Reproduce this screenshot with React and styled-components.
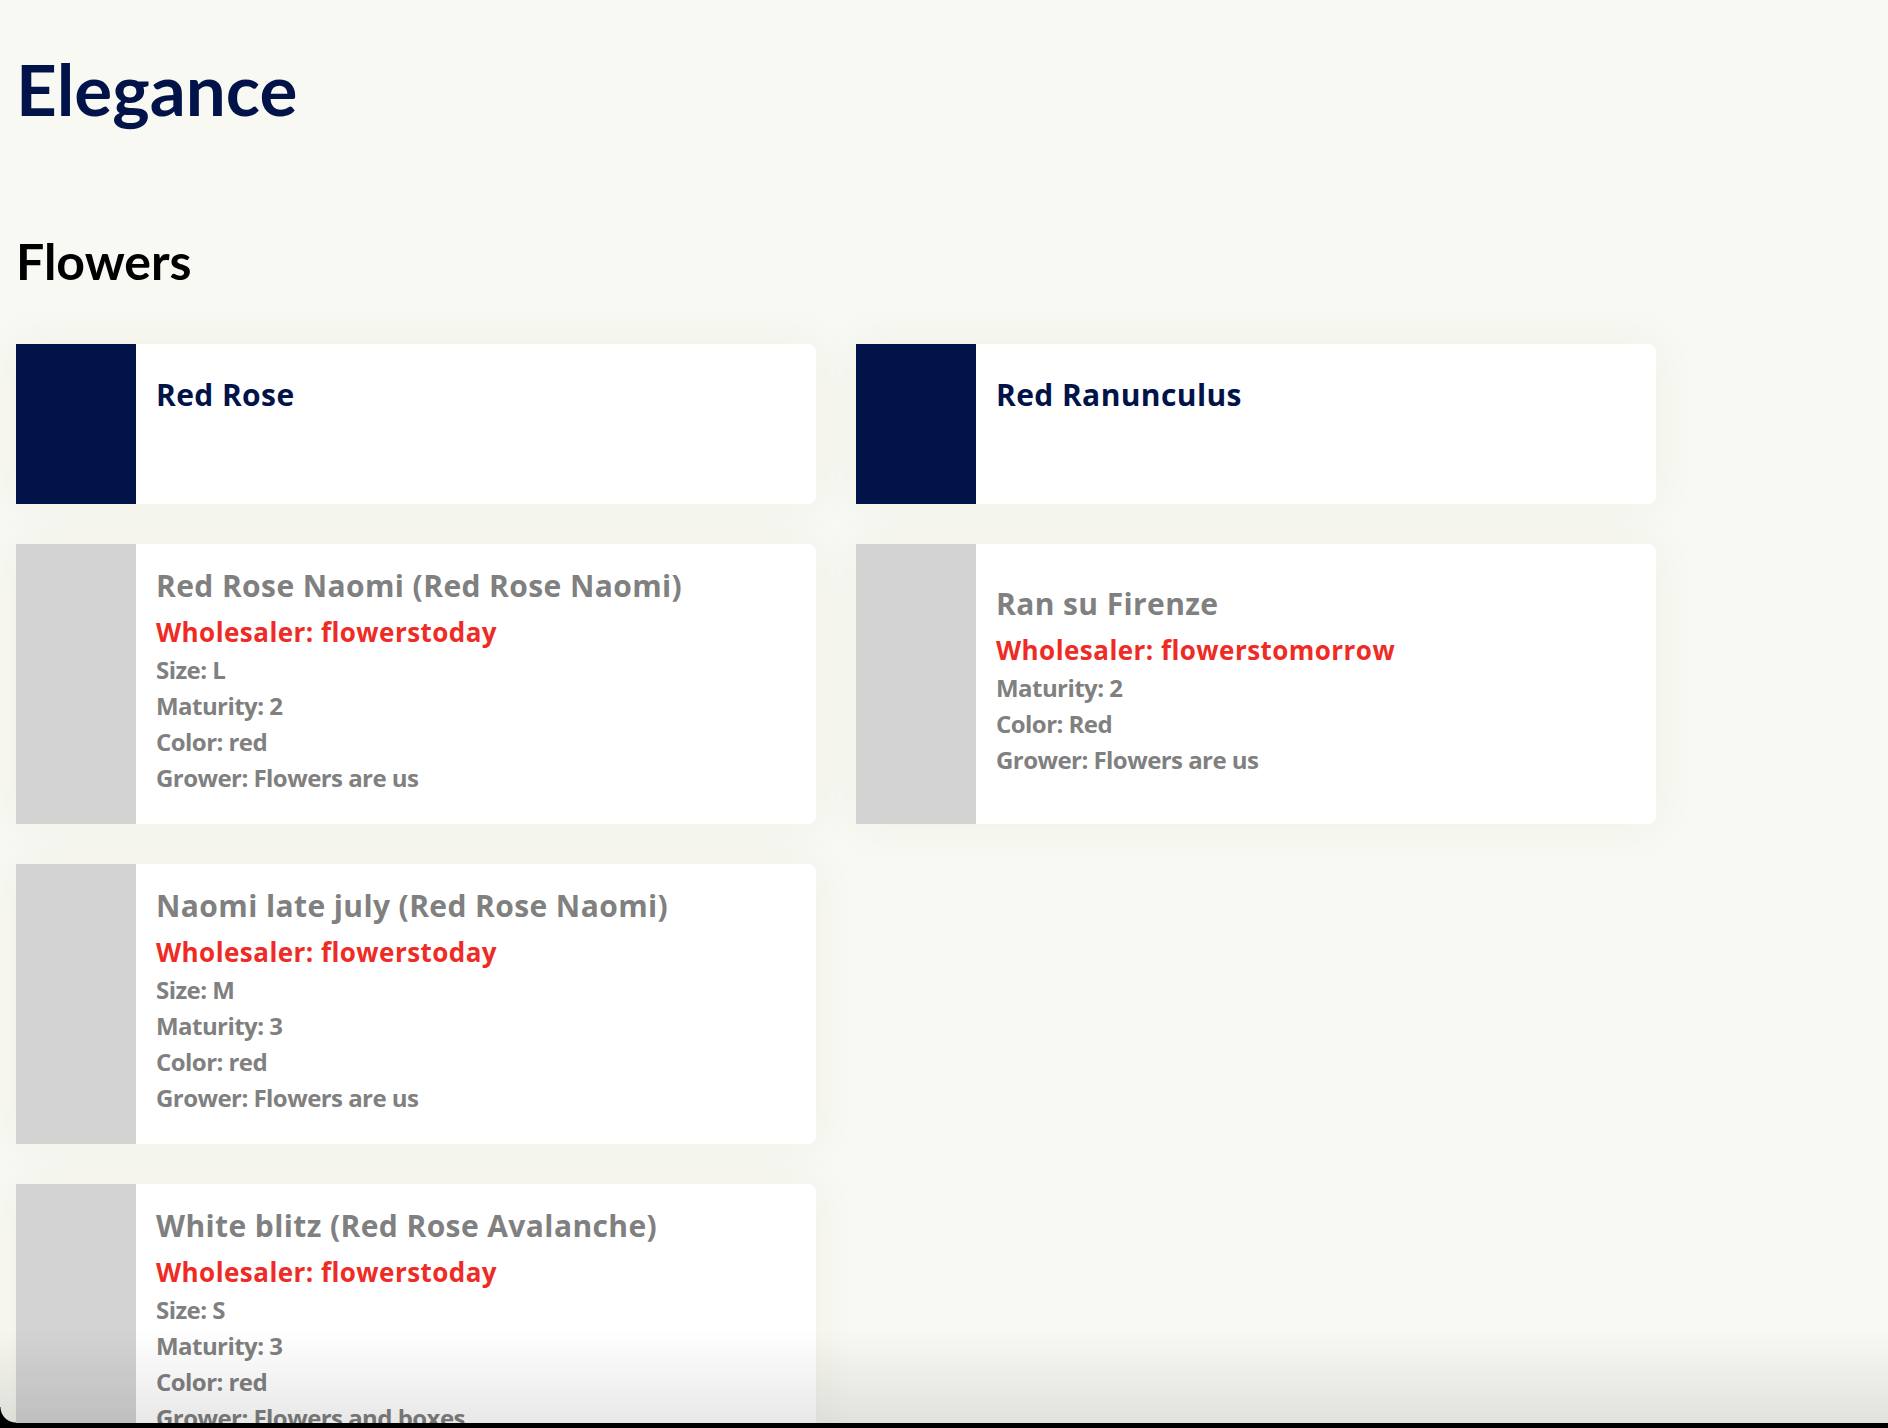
import React from 'react'
import styled, { createGlobalStyle } from 'styled-components'

const GlobalStyle = createGlobalStyle`
  html, body {
    margin: 0;
    padding: 0;
    background: #f9f9f3;
    font-family: Lato, "Open Sans", sans-serif;
  }
`

const categories = [
  {
    name: 'Red Rose',
    flowers: [
      {
        name: 'Red Rose Naomi (Red Rose Naomi)',
        wholesaler: 'flowerstoday',
        details: ['Size: L', 'Maturity: 2', 'Color: red', 'Grower: Flowers are us'],
      },
      {
        name: 'Naomi late july (Red Rose Naomi)',
        wholesaler: 'flowerstoday',
        details: ['Size: M', 'Maturity: 3', 'Color: red', 'Grower: Flowers are us'],
      },
      {
        name: 'White blitz (Red Rose Avalanche)',
        wholesaler: 'flowerstoday',
        details: ['Size: S', 'Maturity: 3', 'Color: red', 'Grower: Flowers and boxes'],
      },
    ],
  },
  {
    name: 'Red Ranunculus',
    flowers: [
      {
        name: 'Ran su Firenze',
        wholesaler: 'flowerstomorrow',
        details: ['Maturity: 2', 'Color: Red', 'Grower: Flowers are us'],
      },
    ],
  },
]

function App() {
  return (
    <Page>
      <GlobalStyle />
      <Brand>Elegance</Brand>
      <SectionTitle>Flowers</SectionTitle>
      <Columns>
        {categories.map((c) => (
          <Column key={c.name}>
            <Card $kind="category">
              <Thumb $dark />
              <CategoryBody>
                <CardTitle $dark>{c.name}</CardTitle>
              </CategoryBody>
            </Card>
            {c.flowers.map((f) => (
              <Card key={f.name}>
                <Thumb />
                <FlowerBody>
                  <CardTitle>{f.name}</CardTitle>
                  <Wholesaler>Wholesaler: {f.wholesaler}</Wholesaler>
                  {f.details.map((d) => (
                    <Detail key={d}>{d}</Detail>
                  ))}
                </FlowerBody>
              </Card>
            ))}
          </Column>
        ))}
      </Columns>
      <WindowEdge />
    </Page>
  )
}

export default App

const Page = styled.div`
    padding: 46px 16px 60px;
`

const Brand = styled.h1`
    margin: 0;
    font-size: 71px;
    line-height: 86px;
    font-weight: 700;
    color: #021349;
`

const SectionTitle = styled.h2`
    margin: 99px 0 53px;
    font-size: 50px;
    line-height: 60px;
    font-weight: 700;
    color: #000;
`

const Columns = styled.div`
    display: flex;
    align-items: flex-start;
    gap: 40px;
`

const Column = styled.div`
    display: flex;
    flex-direction: column;
    gap: 40px;
    width: 800px;
`

const Card = styled.div`
    display: flex;
    height: ${(p) => (p.$kind === 'category' ? '160px' : '280px')};
    background: #fff;
    border-radius: 8px;
    box-shadow: 0 0 48px rgba(60, 60, 20, 0.05);
`

const Thumb = styled.div`
    flex: 0 0 120px;
    background: ${(p) => (p.$dark ? '#021349' : '#d3d3d3')};
`

const CategoryBody = styled.div`
    padding: 33px 20px 0;
`

const FlowerBody = styled.div`
    display: flex;
    flex-direction: column;
    justify-content: center;
    padding: 0 20px 4px;
`

const CardTitle = styled.div`
    font-family: "Open Sans", Lato, sans-serif;
    font-size: 30px;
    line-height: 36px;
    font-weight: 700;
    letter-spacing: 0.4px;
    color: ${(p) => (p.$dark ? '#021349' : '#808080')};
`

const Wholesaler = styled.div`
    margin: 10px 0 2px;
    font-family: "Open Sans", Lato, sans-serif;
    font-size: 26px;
    line-height: 36px;
    font-weight: 700;
    letter-spacing: 0.45px;
    color: #ee2b24;
`

const Detail = styled.div`
    font-family: "Open Sans", Lato, sans-serif;
    font-size: 24px;
    line-height: 36px;
    font-weight: 700;
    letter-spacing: -0.55px;
    color: #808080;
`

const WindowEdge = styled.div`
    position: fixed;
    left: 0;
    right: 0;
    bottom: 0;
    height: 98px;
    pointer-events: none;
    background: linear-gradient(to bottom, rgba(0, 0, 0, 0) 0, rgba(0, 0, 0, 0.09) 93px, #000 93px);

    &:before {
        content: "";
        position: absolute;
        left: 0;
        bottom: 5px;
        width: 16px;
        height: 16px;
        background: radial-gradient(circle at 16px 0, transparent 15px, #000 16px);
    }
`
